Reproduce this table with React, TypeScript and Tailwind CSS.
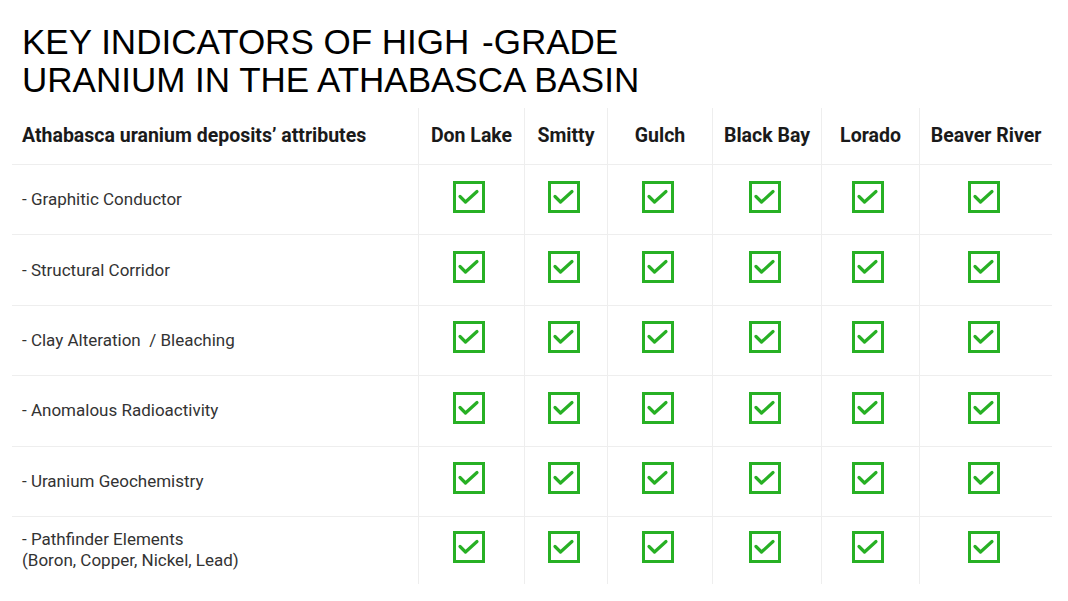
import React from 'react'

const deposits = ['Don Lake', 'Smitty', 'Gulch', 'Black Bay', 'Lorado', 'Beaver River']

const attributes: string[][] = [
    ['- Graphitic Conductor'],
    ['- Structural Corridor'],
    ['- Clay Alteration  / Bleaching'],
    ['- Anomalous Radioactivity'],
    ['- Uranium Geochemistry'],
    ['- Pathfinder Elements', '(Boron, Copper, Nickel, Lead)'],
]

function CheckBox() {
    return (
        <svg width="32" height="32" viewBox="0 0 32 32" fill="none" className="mb-[6px] mr-[5px]">
            <rect x="1.5" y="1.5" width="29" height="29" stroke="#27b024" strokeWidth="3" />
            <path d="M7 15.5 L12.5 21 L24 10.5" stroke="#27b024" strokeWidth="3.2" strokeLinecap="round" strokeLinejoin="round" />
        </svg>
    )
}

export default function App() {
    return (
        <div className="w-[1068px] h-[601px] bg-white overflow-hidden">
            <h1 className="pl-[22px] pt-[23px] font-['Liberation_Sans',Arial,sans-serif] text-[35px] leading-[38px] text-black whitespace-pre">
                KEY INDICATORS OF HIGH <span className="ml-[3px]">-GRADE</span>
                <br />
                URANIUM IN THE ATHABASCA BASIN
            </h1>

            <div className="ml-[12px] mt-[9px] w-[1040px] grid grid-cols-[406px_106px_83px_105px_109px_98px_133px] font-['Roboto',sans-serif]">
                <div className="h-[57px] border-b border-[#eeeeee] flex items-center pl-[10px] text-[19.5px] font-bold text-[#1a1a1a] whitespace-nowrap">
                    Athabasca uranium deposits’ attributes
                </div>
                {deposits.map(d => (
                    <div key={d} className="h-[57px] border-b border-l border-[#eeeeee] flex items-center justify-center text-[19.5px] font-bold text-[#1a1a1a] whitespace-nowrap">
                        {d}
                    </div>
                ))}

                {attributes.map((lines, i) => {
                    const last = i === attributes.length - 1
                    const rowCls = last ? 'h-[67px]' : 'h-[70.4px] border-b border-[#eeeeee]'
                    return (
                        <React.Fragment key={i}>
                            <div className={`${rowCls} flex flex-col justify-center pl-[10px] text-[17px] leading-[21px] text-[#333333]`}>
                                {lines.map(l => (
                                    <span key={l} className="whitespace-pre">{l}</span>
                                ))}
                            </div>
                            {deposits.map(d => (
                                <div key={d} className={`${rowCls} border-l border-l-[#eeeeee] flex items-center justify-center`}>
                                    <CheckBox />
                                </div>
                            ))}
                        </React.Fragment>
                    )
                })}
            </div>
        </div>
    )
}
